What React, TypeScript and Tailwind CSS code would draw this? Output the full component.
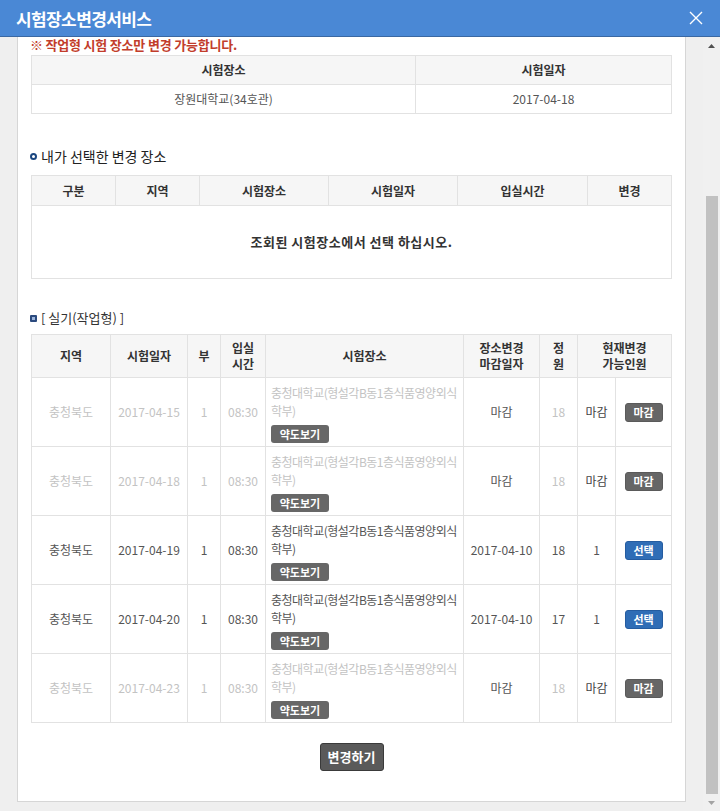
import React from 'react';

type Row = {
  region: string;
  date: string;
  bu: string;
  time: string;
  deadline: string;
  cap: string;
  avail: string;
  closed: boolean;
};

const ROWS: Row[] = [
  { region: '충청북도', date: '2017-04-15', bu: '1', time: '08:30', deadline: '마감', cap: '18', avail: '마감', closed: true },
  { region: '충청북도', date: '2017-04-18', bu: '1', time: '08:30', deadline: '마감', cap: '18', avail: '마감', closed: true },
  { region: '충청북도', date: '2017-04-19', bu: '1', time: '08:30', deadline: '2017-04-10', cap: '18', avail: '1', closed: false },
  { region: '충청북도', date: '2017-04-20', bu: '1', time: '08:30', deadline: '2017-04-10', cap: '17', avail: '1', closed: false },
  { region: '충청북도', date: '2017-04-23', bu: '1', time: '08:30', deadline: '마감', cap: '18', avail: '마감', closed: true },
];

const th = 'border border-[#e2e2e2] bg-[#f6f6f6] text-[12px] font-bold text-[#333] text-center align-middle p-0';
const td = 'border border-[#e2e2e2] text-[12px] text-center align-middle p-0';

function ExamRow({ r }: { r: Row }) {
  const muted = r.closed ? 'text-[#c3c3c3]' : 'text-[#555]';
  return (
    <tr>
      <td className={`${td} h-[69px] ${muted}`}>{r.region}</td>
      <td className={`${td} ${muted}`}>{r.date}</td>
      <td className={`${td} ${muted}`}>{r.bu}</td>
      <td className={`${td} ${muted}`}>{r.time}</td>
      <td className={`${td} text-left align-top pl-[5px] pt-[6px]`}>
        <div className={`${muted} leading-[18px] whitespace-nowrap tracking-[-0.5px]`}>
          충청대학교(형설각B동1층식품영양외식
          <br />
          학부)
        </div>
        <button className="mt-[5px] h-[18px] w-[58px] rounded-[3px] bg-[#676767] text-white text-[11px] font-bold leading-[18px] block">
          약도보기
        </button>
      </td>
      <td className={`${td} text-[#555]`}>{r.deadline}</td>
      <td className={`${td} ${muted}`}>{r.cap}</td>
      <td className={`${td} ${r.closed ? 'text-[#444]' : 'text-[#555]'}`}>{r.avail}</td>
      <td className={td}>
        {r.closed ? (
          <button className="h-[19px] w-[38px] rounded-[3px] bg-[#666] border border-[#5a5a5a] text-white text-[11px] font-bold leading-[17px]">
            마감
          </button>
        ) : (
          <button className="h-[19px] w-[38px] rounded-[3px] bg-[#2f6db6] border border-[#255ca0] text-white text-[11px] font-bold leading-[17px]">
            선택
          </button>
        )}
      </td>
    </tr>
  );
}

function Scrollbar() {
  return (
    <div className="w-[17px] shrink-0 flex flex-col bg-[#f0f0f0]">
      <div className="h-[17px] flex items-center justify-center">
        <svg width="7" height="4" viewBox="0 0 7 4">
          <path d="M0 4 L3.5 0 L7 4 Z" fill="#505050" />
        </svg>
      </div>
      <div className="flex-1 flex flex-col pl-[3px] pr-[2px]">
        <div className="mt-[142px] flex-1 bg-[#c1c1c1]" />
      </div>
      <div className="h-[17px] flex items-center justify-center">
        <svg width="7" height="4" viewBox="0 0 7 4">
          <path d="M0 0 L3.5 4 L7 0 Z" fill="#a3a3a3" />
        </svg>
      </div>
    </div>
  );
}

export default function App() {
  return (
    <div className="w-[720px] h-[811px] flex flex-col bg-[#efefef] overflow-hidden font-['Noto_Sans_CJK_KR','Noto_Sans',sans-serif] text-[#333]">
      <header className="h-[37px] shrink-0 bg-[#4a88d5] border-b border-[#3a68a2] flex items-center justify-between pl-[16px] pr-[17px]">
        <h1 className="text-white text-[17px] font-bold tracking-[-0.6px] leading-none">시험장소변경서비스</h1>
        <svg width="14" height="14" viewBox="0 0 14 14">
          <path d="M1 1 L13 13 M13 1 L1 13" stroke="#ffffff" strokeWidth="1.4" fill="none" />
        </svg>
      </header>
      <div className="flex-1 flex min-h-0">
        <div className="flex-1 flex flex-col pl-[17px] pr-[17px] pb-[9px]">
          <div className="flex-1 bg-white border border-t-0 border-[#d6d6d6] px-[13px] flex flex-col">
            <p className="text-[13px] tracking-[-0.2px] font-bold text-[#c23d2b] leading-[16px] -ml-[1px]">※ 작업형 시험 장소만 변경 가능합니다.</p>

            <table className="mt-[2px] w-full table-fixed border-collapse">
              <colgroup>
                <col className="w-[384px]" />
                <col />
              </colgroup>
              <thead>
                <tr>
                  <th className={`${th} h-[29px]`}>시험장소</th>
                  <th className={th}>시험일자</th>
                </tr>
              </thead>
              <tbody>
                <tr>
                  <td className={`${td} h-[29px] text-[#555]`}>장원대학교(34호관)</td>
                  <td className={`${td} text-[#555]`}>2017-04-18</td>
                </tr>
              </tbody>
            </table>

            <div className="mt-[33px] h-[18px] flex items-center">
              <span className="ml-[-1px] mr-[4px] w-[7px] h-[7px] rounded-full border-2 border-[#1a4680]" />
              <span className="text-[14px] leading-[18px] text-[#222]">내가 선택한 변경 장소</span>
            </div>

            <table className="mt-[10px] w-full table-fixed border-collapse">
              <colgroup>
                <col className="w-[84px]" />
                <col className="w-[84px]" />
                <col className="w-[129px]" />
                <col className="w-[129px]" />
                <col className="w-[130px]" />
                <col />
              </colgroup>
              <thead>
                <tr>
                  <th className={`${th} h-[30px]`}>구분</th>
                  <th className={th}>지역</th>
                  <th className={th}>시험장소</th>
                  <th className={th}>시험일자</th>
                  <th className={th}>입실시간</th>
                  <th className={th}>변경</th>
                </tr>
              </thead>
              <tbody>
                <tr>
                  <td colSpan={6} className={`${td} h-[73px] text-[13px] font-bold text-[#333] tracking-[0.5px]`}>
                    조회된 시험장소에서 선택 하십시오.
                  </td>
                </tr>
              </tbody>
            </table>

            <div className="mt-[30px] h-[18px] flex items-center">
              <span className="ml-[-1px] mr-[4px] w-[7px] h-[7px] rounded-[1px] bg-[#2b4a7e] flex items-center justify-center">
                <span className="w-[3px] h-[3px] bg-[#9db6dc]" />
              </span>
              <span className="text-[13px] leading-[18px] text-[#333]">[ 실기(작업형) ]</span>
            </div>

            <table className="mt-[7px] w-full table-fixed border-collapse">
              <colgroup>
                <col className="w-[79px]" />
                <col className="w-[77px]" />
                <col className="w-[33px]" />
                <col className="w-[45px]" />
                <col className="w-[198px]" />
                <col className="w-[76px]" />
                <col className="w-[38px]" />
                <col className="w-[38px]" />
                <col />
              </colgroup>
              <thead>
                <tr className="leading-[16px]">
                  <th className={`${th} h-[43px]`}>지역</th>
                  <th className={th}>시험일자</th>
                  <th className={th}>부</th>
                  <th className={th}>
                    입실
                    <br />
                    시간
                  </th>
                  <th className={th}>시험장소</th>
                  <th className={th}>
                    장소변경
                    <br />
                    마감일자
                  </th>
                  <th className={th}>
                    정
                    <br />원
                  </th>
                  <th colSpan={2} className={th}>
                    현재변경
                    <br />
                    가능인원
                  </th>
                </tr>
              </thead>
              <tbody>
                {ROWS.map((r) => (
                  <ExamRow key={r.date} r={r} />
                ))}
              </tbody>
            </table>

            <div className="mt-[20px] flex justify-center">
              <button className="h-[28px] w-[64px] rounded-[3px] bg-[#5a5a5a] border border-[#3a3a3a] text-white text-[13px] font-bold leading-[26px]">
                변경하기
              </button>
            </div>
          </div>
        </div>
        <Scrollbar />
      </div>
    </div>
  );
}
